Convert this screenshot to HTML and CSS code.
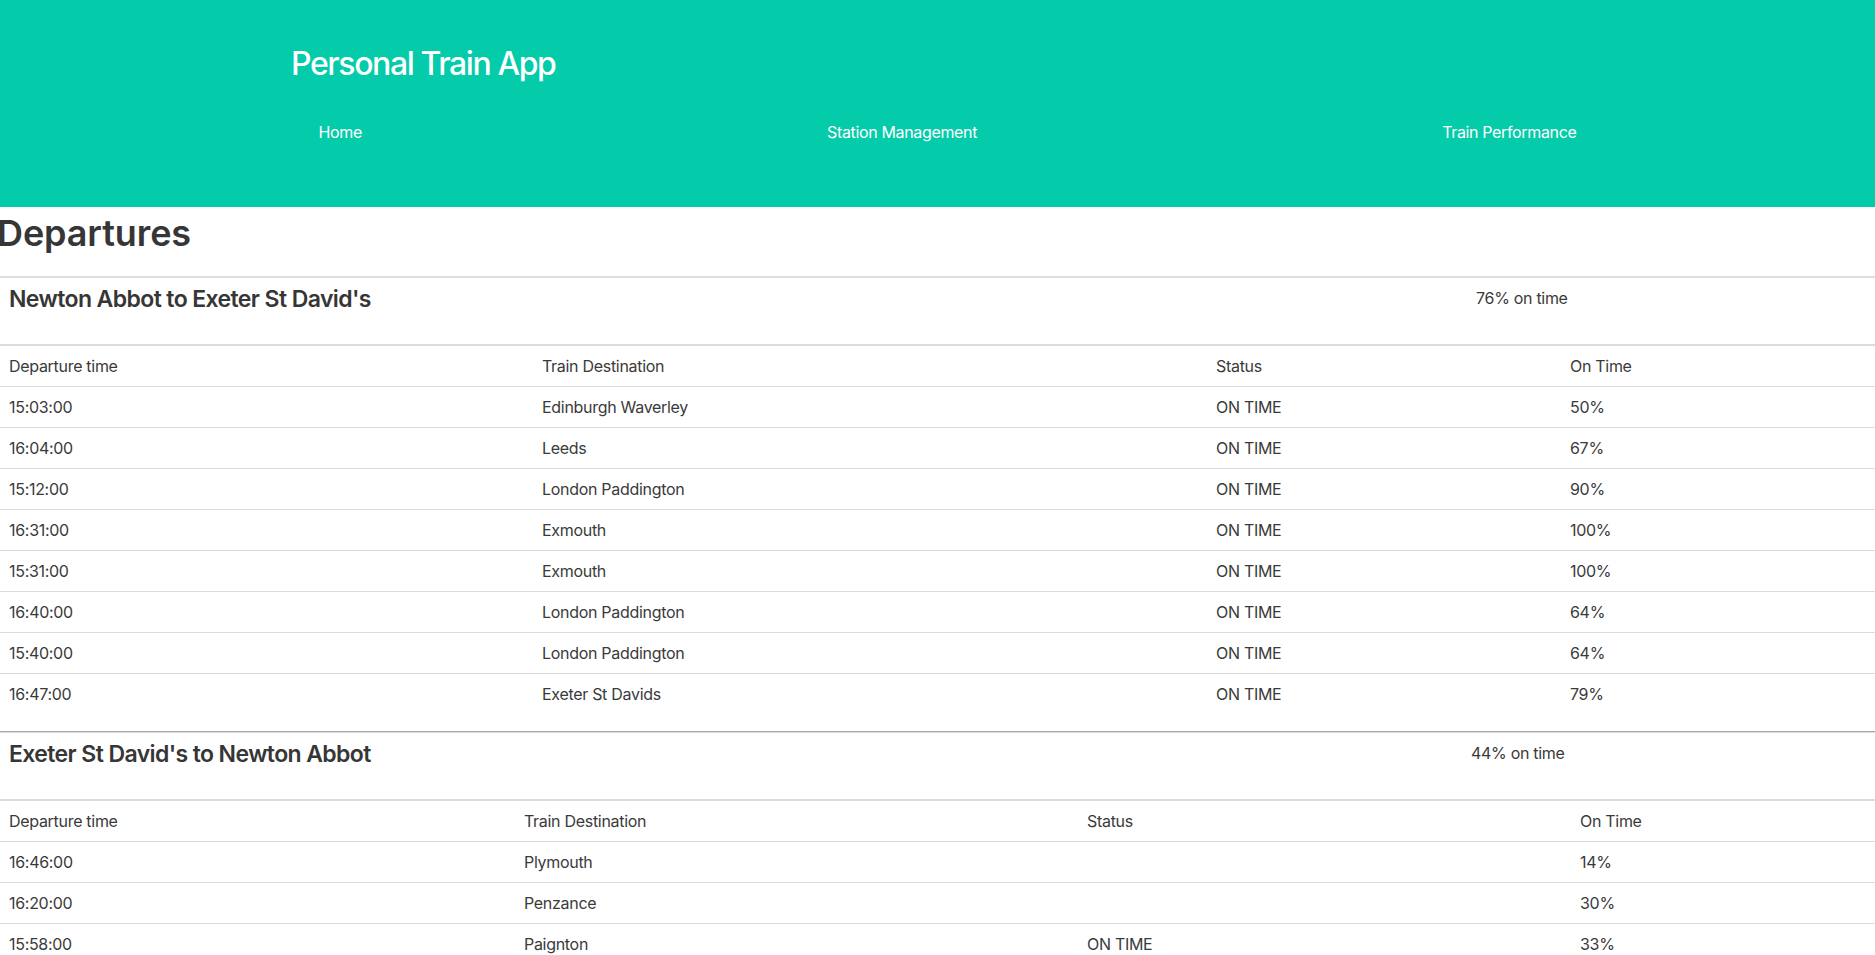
FILE: index.html
```html
<!DOCTYPE html>
<html lang="en">
<head>
<meta charset="utf-8">
<title>Personal Train App</title>
<link rel="stylesheet" href="styles.css">
</head>
<body>
<header class="hero">
  <h1 class="brand">Personal Train App</h1>
  <nav class="nav">
    <a class="nav-item" href="#">Home</a>
    <a class="nav-item" href="#">Station Management</a>
    <a class="nav-item" href="#">Train Performance</a>
  </nav>
</header>

<main class="page">
  <h1 class="page-title">Departures</h1>

  <section class="route route-first">
    <div class="route-head">
      <h2 class="route-title">Newton Abbot to Exeter St David's</h2>
      <div class="route-pct">76% on time</div>
    </div>
    <table class="departures">
      <colgroup>
        <col class="c1"><col class="c2"><col class="c3"><col class="c4">
      </colgroup>
      <tbody>
        <tr><td>Departure time</td><td>Train Destination</td><td>Status</td><td>On Time</td></tr>
        <tr><td>15:03:00</td><td>Edinburgh Waverley</td><td>ON TIME</td><td>50%</td></tr>
        <tr><td>16:04:00</td><td>Leeds</td><td>ON TIME</td><td>67%</td></tr>
        <tr><td>15:12:00</td><td>London Paddington</td><td>ON TIME</td><td>90%</td></tr>
        <tr><td>16:31:00</td><td>Exmouth</td><td>ON TIME</td><td>100%</td></tr>
        <tr><td>15:31:00</td><td>Exmouth</td><td>ON TIME</td><td>100%</td></tr>
        <tr><td>16:40:00</td><td>London Paddington</td><td>ON TIME</td><td>64%</td></tr>
        <tr><td>15:40:00</td><td>London Paddington</td><td>ON TIME</td><td>64%</td></tr>
        <tr><td>16:47:00</td><td>Exeter St Davids</td><td>ON TIME</td><td>79%</td></tr>
      </tbody>
    </table>
  </section>

  <hr class="divider">

  <section class="route route-return">
    <div class="route-head">
      <h2 class="route-title">Exeter St David's to Newton Abbot</h2>
      <div class="route-pct">44% on time</div>
    </div>
    <table class="departures">
      <colgroup>
        <col class="c1"><col class="c2"><col class="c3"><col class="c4">
      </colgroup>
      <tbody>
        <tr><td>Departure time</td><td>Train Destination</td><td>Status</td><td>On Time</td></tr>
        <tr><td>16:46:00</td><td>Plymouth</td><td></td><td>14%</td></tr>
        <tr><td>16:20:00</td><td>Penzance</td><td></td><td>30%</td></tr>
        <tr><td>15:58:00</td><td>Paignton</td><td>ON TIME</td><td>33%</td></tr>
      </tbody>
    </table>
  </section>
</main>
</body>
</html>
```

FILE: styles.css
```css
html, body {
  margin: 0;
  padding: 0;
  overflow-x: hidden;
  background: #ffffff;
}

body {
  font-family: Inter, "Noto Sans", sans-serif;
  font-size: 16px;
  line-height: 24px;
  letter-spacing: -0.3px;
  color: #3a3a3a;
}

/* ---------- header ---------- */
.hero {
  background: #04cbaa;
  color: #ffffff;
  height: 207px;
  box-sizing: border-box;
  padding-top: 44px;
}

.brand {
  margin: 0;
  padding-left: 291px;
  font-size: 32px;
  line-height: 40px;
  font-weight: 500;
  letter-spacing: -1.4px;
}

.nav {
  display: flex;
  margin: 36px 66px 0 86px;
}

.nav-item {
  flex: 1 1 auto;
  text-align: center;
  color: #ffffff;
  text-decoration: none;
  font-size: 16px;
  line-height: 24px;
  letter-spacing: -0.35px;
}

/* ---------- page ---------- */
.page {
  margin: 0 -3px;
}

.page-title {
  margin: 8px 0 25px;
  font-size: 36px;
  line-height: 36px;
  font-weight: 600;
  letter-spacing: -0.1px;
  color: #363636;
}

.route-first {
  border-top: 2px solid #dedede;
}

.route-head {
  display: grid;
  grid-template-columns: 1fr 414px;
  border-bottom: 2px solid #dbdbdb;
}

.route-return .route-head {
  grid-template-columns: 1fr 419px;
}

.route-title {
  margin: 0;
  padding: 8px 12px 31px;
  font-size: 23px;
  line-height: 27px;
  font-weight: 600;
  letter-spacing: -0.6px;
  color: #363636;
}

.route-pct {
  padding: 8px 12px;
}

.departures {
  width: 100%;
  border-collapse: collapse;
  table-layout: fixed;
}

.departures td {
  padding: 8px 12px;
  border-bottom: 1px solid #dbdbdb;
  vertical-align: top;
  white-space: nowrap;
}

.departures tr:last-child td {
  border-bottom: 0;
}

.route-first .c1 { width: 533px; }
.route-first .c2 { width: 674px; }
.route-first .c3 { width: 354px; }

.route-return .c1 { width: 515px; }
.route-return .c2 { width: 563px; }
.route-return .c3 { width: 493px; }

.divider {
  margin: 17px 0 0;
  height: 0;
  border: 0;
  border-top: 1px solid #a8a8a8;
  border-bottom: 1px solid #dcdcdc;
}
```
